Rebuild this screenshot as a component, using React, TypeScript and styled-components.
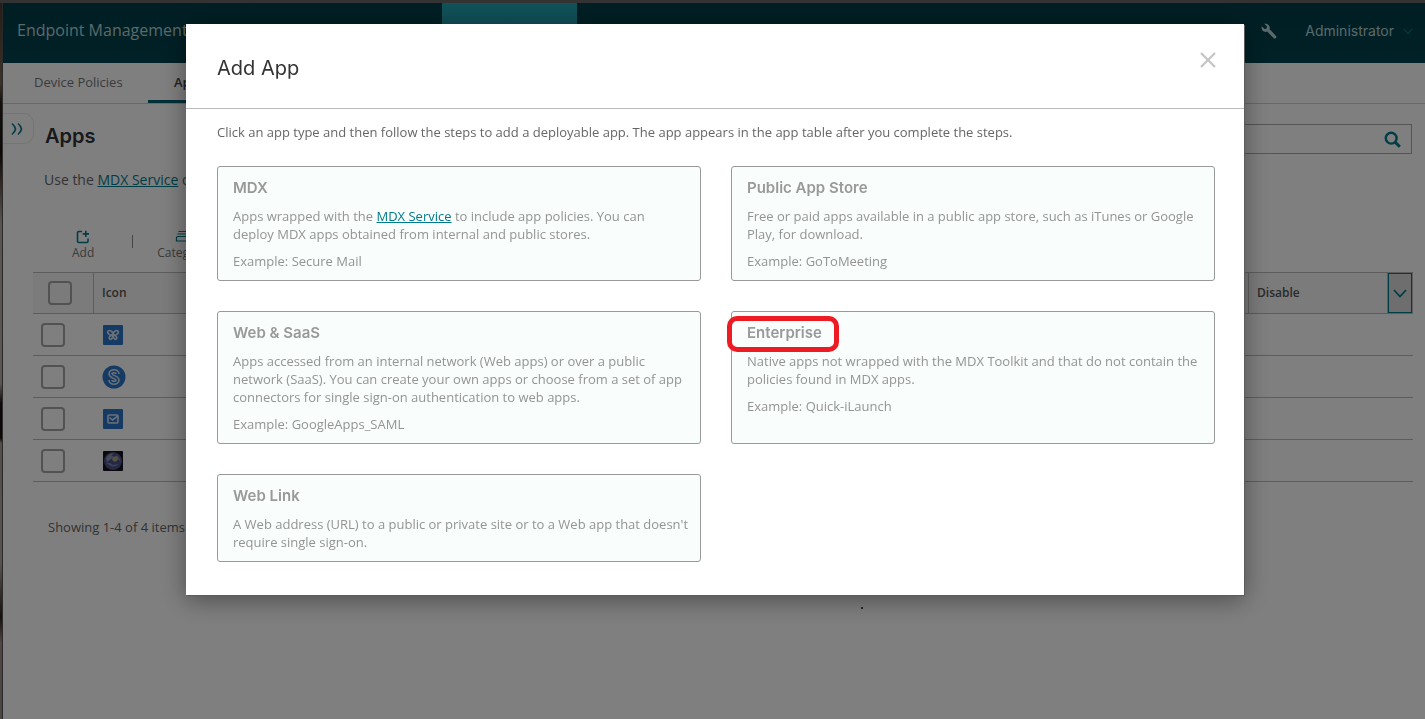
import React from "react";
import styled, { createGlobalStyle, css } from "styled-components";

const Global = createGlobalStyle`
  * { box-sizing: border-box; }
  html, body, #root { height: 100%; }
  body {
    margin: 0;
    font-family: "Open Sans", "Noto Sans", sans-serif;
    font-size: 13px;
    line-height: 18px;
    color: #666;
    background: #fff;
  }
  h1, h2, h3, p { margin: 0; }
`;

const Frame = styled.div`
  display: grid;
  grid-template-columns: 3px minmax(0, 1fr);
  min-height: 100vh;
  border-top: 3px solid #666;
`;
const Edge = styled.div`
  border-right: 1px solid #555;
  background: linear-gradient(#4a3a2c 0, #7a6450 80px, #2a2018 100px, #181210 150px, #5a4638 175px, #b0a8a4 220px, #b8b0ac 380px, #1a1412 400px, #181210 435px, #a89c98 440px, #b0a4a0 560px, #30201c 614px, #a08c84 640px, #988c80 100%);
`;
const Page = styled.div`
  min-width: 0;
`;

const TopBar = styled.header`
  display: flex;
  align-items: center;
  height: 60px;
  padding: 0 12px 4px 14px;
  background: linear-gradient(#003d47, #00434f);
  color: #b4d2d4;
`;
const Brand = styled.a`
  flex: 0 0 425px;
  padding-bottom: 2px;
  font-size: 16px;
  line-height: 24px;
  color: inherit;
  text-decoration: none;
`;
const TopTab = styled.div`
  align-self: stretch;
  width: 135px;
  margin: 0 auto -4px 0;
  background: linear-gradient(#22a4b4, #1d8c9a);
`;
const IconButton = styled.button`
  display: flex;
  padding: 0;
  border: 0;
  background: none;
  color: inherit;
`;
const UserButton = styled(IconButton)`
  align-items: center;
  gap: 9px;
  margin-left: 28px;
  font: 14px/20px Inter, sans-serif;
`;
const UserArrow = styled.span`
  display: flex;
  color: #02707e;
`;

const SubNav = styled.nav`
  display: flex;
  height: 41px;
  border-bottom: 1px solid #d0d0d0;
`;
const SubTab = styled.a<{ $active?: boolean }>`
  flex: 0 0 145px;
  padding: 9px 0 0 31px;
  font-size: 13px;
  line-height: 20px;
  color: #777;
  text-decoration: none;
  ${(p) =>
    p.$active &&
    css`
      flex: none;
      padding: 9px 26px 0;
      font-weight: 600;
      color: #444;
      border-bottom: 3px solid #00606e;
    `}
`;

const Heading = styled.div`
  display: flex;
  align-items: flex-start;
  justify-content: space-between;
  padding: 9px 13px 0 0;
`;
const Expand = styled.button`
  display: flex;
  align-items: center;
  width: 31px;
  height: 31px;
  padding: 0 0 0 8px;
  border: 1px solid #e8e8e8;
  border-left: 0;
  border-radius: 0 10px 10px 0;
  background: none;
  color: #027a8c;
`;
const PageTitle = styled.h1`
  flex: 1;
  padding: 9px 0 0 11px;
  font-family: Inter, sans-serif;
  font-size: 20px;
  font-weight: 600;
  line-height: 28px;
  color: #333;
`;
const Search = styled.label`
  display: flex;
  align-items: center;
  width: 300px;
  height: 30px;
  margin-top: 11px;
  padding-right: 10px;
  border: 1px solid #aaa;
  color: #027a8c;
`;
const SearchInput = styled.input`
  flex: 1;
  min-width: 0;
  border: 0;
  outline: 0;
  background: none;
`;
const Hint = styled.p`
  padding: 16px 0 0 41px;
  font-size: 14px;
  line-height: 20px;
`;
const Link = styled.a`
  color: #027a8c;
`;

const Toolbar = styled.div`
  display: flex;
  align-items: center;
  gap: 24px;
  padding: 39px 0 11px 69px;
`;
const Tool = styled.button`
  display: flex;
  flex-direction: column;
  align-items: center;
  padding: 0;
  border: 0;
  background: none;
  color: #777;
  font: 500 12px/16px "Open Sans", sans-serif;
  svg { color: #027a8c; }
`;
const Divider = styled.span`
  width: 1px;
  height: 13px;
  margin: 0 0 8px 14px;
  background: #888;
`;

const Grid = styled.table`
  width: calc(100% - 42px);
  margin-left: 30px;
  border-collapse: separate;
  border-spacing: 0;
  table-layout: fixed;
`;
const HeadCell = styled.th<{ $width?: number }>`
  width: ${(p) => (p.$width ? `${p.$width}px` : "auto")};
  height: 42px;
  padding: 0 8px;
  border: solid #bbb;
  border-width: 1px 1px 1px 0;
  background: #f6f6f6;
  font-size: 12px;
  font-weight: 600;
  text-align: left;
  color: #555;
`;
const MenuCell = styled(HeadCell)`
  padding: 0;
  background: #ddd;
`;
const MenuButton = styled(IconButton)`
  align-items: center;
  justify-content: center;
  width: 100%;
  height: 40px;
  border: 1px solid #027a8c;
  color: #027a8c;
`;
const Cell = styled.td`
  height: 42px;
  padding: 0 8px;
  border-bottom: 1px solid #bbb;
  svg { display: block; }
`;
const Check = styled.input<{ $head?: boolean }>`
  appearance: none;
  display: block;
  width: 24px;
  height: 24px;
  margin: 0 0 0 ${(p) => (p.$head ? 7 : 0)}px;
  border: 2px solid #a4a4a4;
  border-radius: 4px;
`;
const Count = styled.p`
  padding: 36px 0 0 45px;
`;

const Overlay = styled.div`
  position: fixed;
  inset: 0;
  padding: 24px 181px 0 186px;
  background: rgba(0, 0, 0, 0.5);
`;
const Dialog = styled.section`
  background: #fff;
  box-shadow: 1px 1px 0 #5c5c5c, 0 5px 24px rgba(0, 0, 0, 0.4);
`;
const DialogHead = styled.div`
  display: flex;
  align-items: center;
  justify-content: space-between;
  height: 85px;
  padding: 4px 27px 0 31px;
  border-bottom: 1px solid #bbb;
  color: #333;
`;
const DialogTitle = styled.h2`
  font-family: Inter, sans-serif;
  font-size: 20px;
  font-weight: 400;
  line-height: 28px;
`;
const Close = styled(IconButton)`
  margin-bottom: 16px;
  color: #c4c4c4;
`;
const DialogBody = styled.div`
  padding: 14px 29px 33px 31px;
`;
const Cards = styled.div`
  display: grid;
  grid-template-columns: 1fr 1fr;
  gap: 30px;
  margin-top: 25px;
`;
const Card = styled.article`
  display: flex;
  flex-direction: column;
  gap: 9px;
  padding: 11px 10px 10px 15px;
  border: 1px solid #999;
  border-radius: 3px;
  background: #f9fdfc;
  color: #949494;
`;
const CardTitle = styled.h3`
  position: relative;
  align-self: flex-start;
  font-family: Inter, sans-serif;
  font-size: 15px;
  font-weight: 600;
  line-height: 20px;
  color: #999;
`;
const Marker = styled.span`
  position: absolute;
  inset: -7px -17px -9px -20px;
  border: 5px solid #ed1c24;
  border-radius: 10px;
`;
const Speck = styled.span`
  position: absolute;
  left: 861px;
  top: 607px;
  width: 2px;
  height: 2px;
  background: #222;
`;

const AddIcon = () => (
  <svg width="14" height="16" viewBox="0 0 14 16" fill="none" stroke="currentColor" strokeWidth="1.6">
    <path d="M6 2.500H2.800Q1.500 2.500 1.500 3.800V12.200Q1.500 13.500 2.800 13.500H10.700Q12 13.500 12 12.200V9.500M9.800 1.800V8M6.700 4.900H13" />
  </svg>
);
const CategoryIcon = () => (
  <svg width="14" height="16" viewBox="0 0 14 16" fill="none" stroke="currentColor" strokeWidth="1.2">
    <path d="M3.500 2.500H11M2.500 5H12M2.500 7.500H11.500Q12.500 7.500 12.500 8.500V12H1.500V8.500Q1.500 7.500 2.500 7.500" />
  </svg>
);
const Chevron = ({ size = 14 }: { size?: number }) => (
  <svg width={size} height={size} viewBox="0 0 14 14" fill="none" stroke="currentColor" strokeWidth="1.8">
    <path d="M1 4L7 10.500L13 4" />
  </svg>
);
const Wrench = () => (
  <svg width="16" height="16" viewBox="0 0 16 16" fill="currentColor">
    <path d="M3.200.8L6 3.600L5.600 5.600L3.600 6L.8 3.200C.2 5.500 1 7.500 2.800 8.400C4 9 5.200 9 6.200 8.600L12.800 15.200C13.400 15.700 14.200 15.700 14.800 15.200C15.600 14.500 15.600 13.500 15 12.900L8.600 6.200C9 5 8.900 3.700 8 2.500C6.900 .9 5 .3 3.200.8Z" />
  </svg>
);
const Magnifier = () => (
  <svg width="17" height="17" viewBox="0 0 17 17" fill="none" stroke="currentColor" strokeWidth="2.400">
    <circle cx="7.200" cy="7.200" r="5.400" />
    <path d="M11.200 11.200L15.800 15.800" strokeWidth="3" />
  </svg>
);

const Butterfly = () => (
  <svg width="22" height="22" viewBox="0 0 22 22">
    <rect x="1" y="1" width="20" height="20" rx="1" fill="#2b74c8" />
    <g fill="none" stroke="#d4e2f2" strokeWidth="1.600">
      <ellipse cx="8.200" cy="8.800" rx="2.700" ry="1.900" transform="rotate(35 8.200 8.800)" />
      <ellipse cx="13.800" cy="8.800" rx="2.700" ry="1.900" transform="rotate(-35 13.800 8.800)" />
      <ellipse cx="9" cy="13.300" rx="2.100" ry="1.500" transform="rotate(-55 9 13.300)" />
      <ellipse cx="13" cy="13.300" rx="2.100" ry="1.500" transform="rotate(55 13 13.300)" />
    </g>
  </svg>
);
const Swirl = () => {
  const curve = "M15.500 9C15.500 5.300 8.500 5.300 8.500 8.800C8.500 12.300 15.500 11.700 15.500 15.200C15.500 18.700 8.500 18.700 8.500 15";
  return (
    <svg width="24" height="24" viewBox="0 0 24 24">
      <circle cx="12" cy="12" r="11.500" fill="#2b74c8" />
      <g fill="none">
        <path d={curve} stroke="#d4e2f2" strokeWidth="4.600" />
        <path d={curve} stroke="#2b74c8" strokeWidth="1.400" />
      </g>
    </svg>
  );
};
const Mail = () => (
  <svg width="22" height="22" viewBox="0 0 22 22">
    <rect x="1" y="1" width="20" height="20" rx="1" fill="#2b74c8" />
    <rect x="6" y="7" width="10" height="8" rx="1" fill="none" stroke="#d4e2f2" strokeWidth="1.600" />
    <path d="M7.500 9.500L10.500 12L16 8" fill="none" stroke="#d4e2f2" strokeWidth="1.600" />
  </svg>
);
const Earth = () => (
  <svg width="22" height="22" viewBox="0 0 22 22">
    <rect x="1" y="1" width="20" height="20" rx="1" fill="#14141c" />
    <circle cx="11" cy="11" r="9" fill="#4a5288" />
    <path d="M4 8Q7 3 12 3.500L9 6L13 7L9 9L5 12Z" fill="#8c94b0" />
    <path d="M11 7L15 6L17 9L13 12L10 10Z" fill="#b0a480" />
    <path d="M4 13Q8 12 11 15L17 14Q14 17 9 16Z" fill="#7c84b0" />
    <path d="M14 4Q18 7 18.500 12L16 9Z" fill="#747ca0" />
  </svg>
);

const rows = [
  { name: "hub", icon: <Butterfly /> },
  { name: "swirl", icon: <Swirl /> },
  { name: "mail", icon: <Mail /> },
  { name: "web", icon: <Earth /> },
];

type AppType = { title: string; text: React.ReactNode; example?: string; marked?: boolean };
const appTypes: AppType[] = [
  {
    title: "MDX",
    text: (
      <>
        Apps wrapped with the <Link href="#mdx">MDX Service</Link> to include app policies. You can
        <br />
        deploy MDX apps obtained from internal and public stores.
      </>
    ),
    example: "Secure Mail",
  },
  {
    title: "Public App Store",
    text: "Free or paid apps available in a public app store, such as iTunes or Google Play, for download.",
    example: "GoToMeeting",
  },
  {
    title: "Web & SaaS",
    text: (
      <>
        Apps accessed from an internal network (Web apps) or over a public
        <br />
        network (SaaS). You can create your own apps or choose from a set of app
        <br />
        connectors for single sign-on authentication to web apps.
      </>
    ),
    example: "GoogleApps_SAML",
  },
  {
    title: "Enterprise",
    text: "Native apps not wrapped with the MDX Toolkit and that do not contain the policies found in MDX apps.",
    example: "Quick-iLaunch",
    marked: true,
  },
  {
    title: "Web Link",
    text: "A Web address (URL) to a public or private site or to a Web app that doesn't require single sign-on.",
  },
];

export default function App() {
  return (
    <>
      <Global />
      <Frame>
        <Edge />
        <Page>
          <TopBar>
            <Brand href="#home">Endpoint Management</Brand>
            <TopTab />
            <IconButton><Wrench /></IconButton>
            <UserButton>
              Administrator
              <UserArrow><Chevron size={10} /></UserArrow>
            </UserButton>
          </TopBar>
          <SubNav>
            <SubTab href="#policies">Device Policies</SubTab>
            <SubTab href="#apps" $active>Apps</SubTab>
          </SubNav>
          <Heading>
            <Expand>
              <svg width="13" height="14" viewBox="0 0 13 14" fill="none" stroke="currentColor" strokeWidth="1.600">
                <path d="M1 1.500Q4 4 4.500 7Q4 10 1 12.500M7 1.500Q10 4 10.500 7Q10 10 7 12.500" />
              </svg>
            </Expand>
            <PageTitle>Apps</PageTitle>
            <Search>
              <SearchInput type="search" />
              <Magnifier />
            </Search>
          </Heading>
          <Hint>Use the <Link href="#mdx">MDX Service</Link> or</Hint>
          <Toolbar>
            <Tool><AddIcon />Add</Tool>
            <Divider />
            <Tool><CategoryIcon />Category</Tool>
          </Toolbar>
          <Grid>
            <thead>
              <tr>
                <HeadCell $width={61}><Check type="checkbox" $head /></HeadCell>
                <HeadCell $width={120}>Icon</HeadCell>
                <HeadCell />
                <HeadCell $width={139}>Disable</HeadCell>
                <MenuCell $width={25}><MenuButton><Chevron /></MenuButton></MenuCell>
              </tr>
            </thead>
            <tbody>
              {rows.map((row) => (
                <tr key={row.name}>
                  <Cell><Check type="checkbox" /></Cell>
                  <Cell>{row.icon}</Cell>
                  <Cell colSpan={3} />
                </tr>
              ))}
            </tbody>
          </Grid>
          <Count>Showing 1-4 of 4 items</Count>
        </Page>
      </Frame>
      <Overlay>
        <Dialog role="dialog">
          <DialogHead>
            <DialogTitle>Add App</DialogTitle>
            <Close>
              <svg width="18" height="18" viewBox="0 0 18 18" stroke="currentColor" strokeWidth="2.200">
                <path d="M2 2L16 16M16 2L2 16" />
              </svg>
            </Close>
          </DialogHead>
          <DialogBody>
            <p>Click an app type and then follow the steps to add a deployable app. The app appears in the app table after you complete the steps.</p>
            <Cards>
              {appTypes.map((t) => (
                <Card key={t.title}>
                  <CardTitle>
                    {t.title}
                    {t.marked && <Marker />}
                  </CardTitle>
                  <p>{t.text}</p>
                  {t.example && <p>Example: {t.example}</p>}
                </Card>
              ))}
            </Cards>
          </DialogBody>
        </Dialog>
        <Speck />
      </Overlay>
    </>
  );
}
